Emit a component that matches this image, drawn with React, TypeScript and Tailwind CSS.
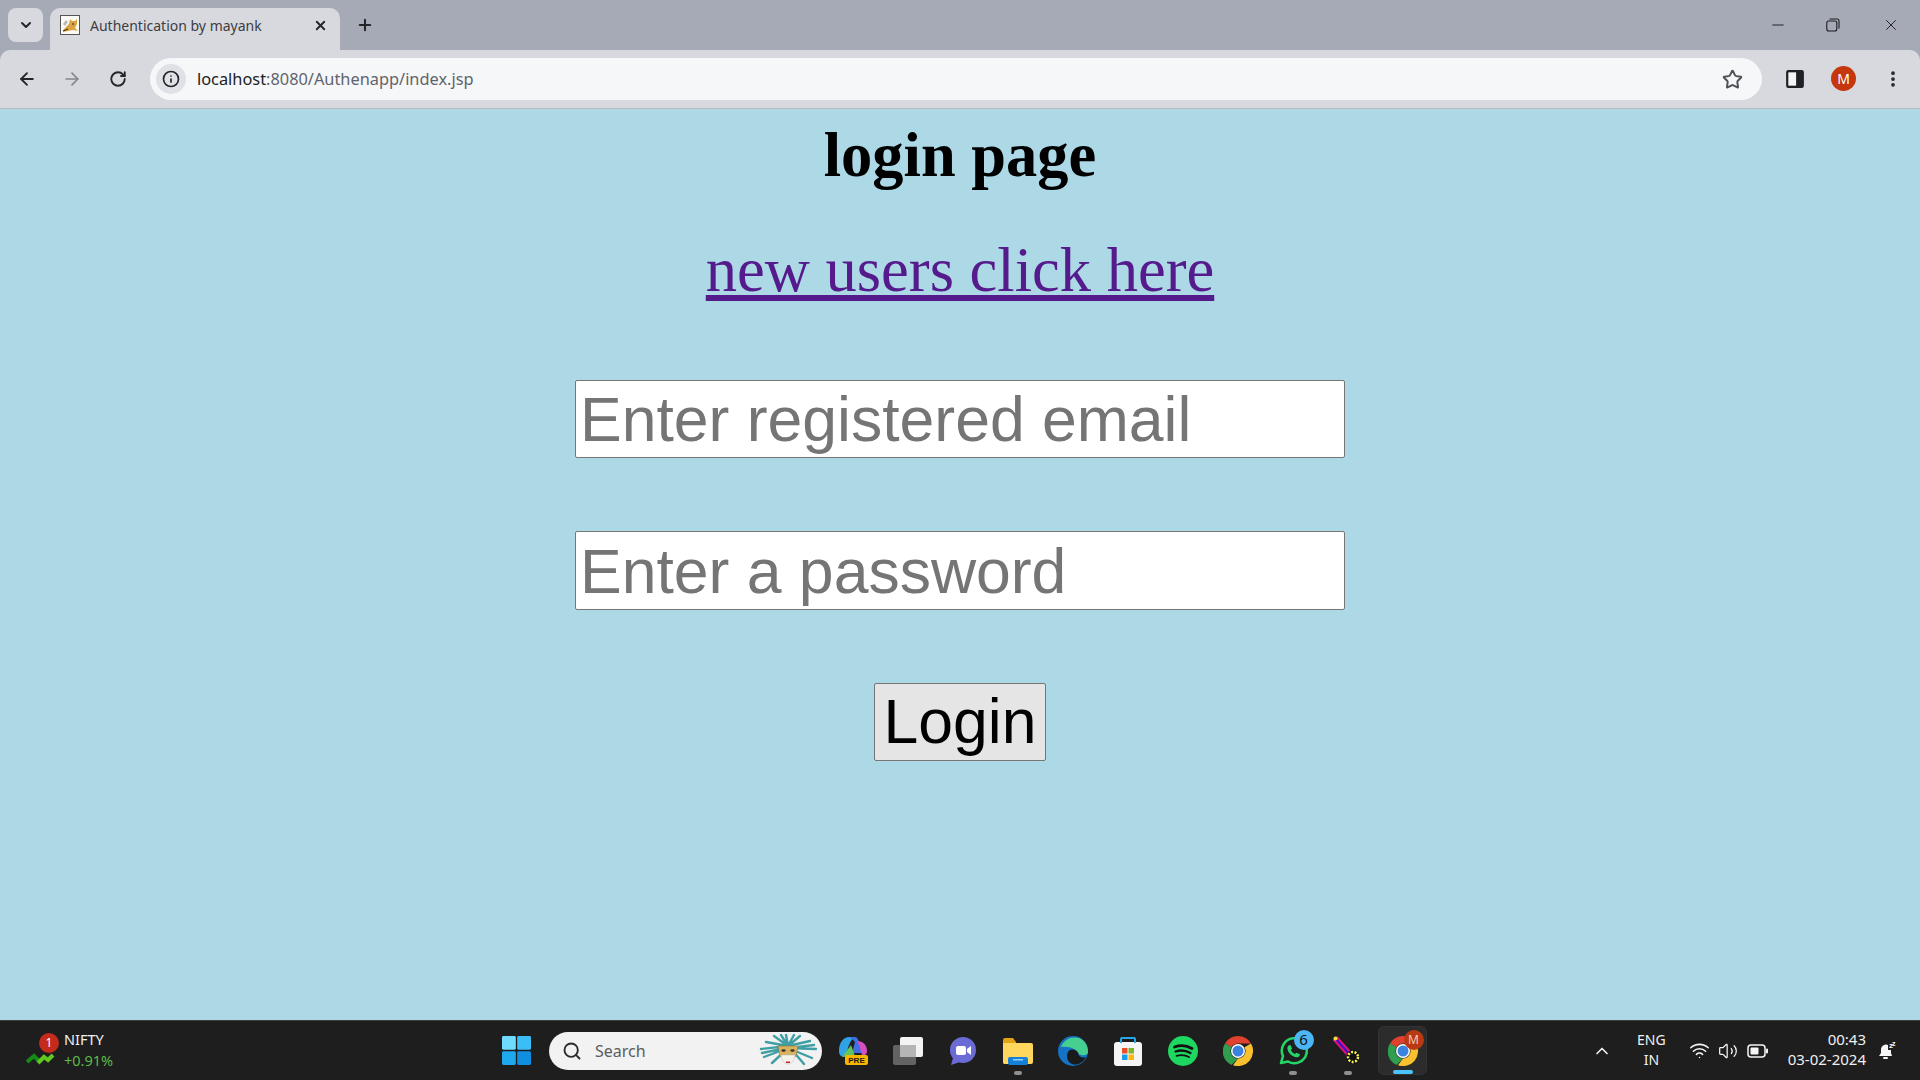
import React from 'react';
import { ArrowLeft, ArrowRight, ChevronDown, ChevronUp, EllipsisVertical, Info, Minus, Plus, RotateCw, Search, Star, Volume2, Wifi, X } from 'lucide-react';

const UI_FONT = "font-['Noto_Sans','Open_Sans',sans-serif]";

function TomcatFavicon() {
  return (
    <svg viewBox="0 0 20 20" className="h-5 w-5 shrink-0">
      <rect x="0.5" y="0.5" width="19" height="19" fill="#fbfaf4" stroke="#555" />
      <path d="M4 14 L9 9 L10 4 L12 6 L15 6 L17 4 L17 9 L15 13 L18 16 L13 15 L8 16 L3 17 Z" fill="#d9a441" />
      <path d="M3 9 L6 5 L8 7 L5 11 Z" fill="#b9b9b9" />
      <path d="M3 16 L8 14 M12 9 L14 9" stroke="#3a2a10" strokeWidth="1" />
    </svg>
  );
}

function TitleBar() {
  return (
    <div className={`flex h-[50px] items-end bg-[#a6a9b6] pl-2 ${UI_FONT}`}>
      <div className="mb-2 flex h-[34px] w-[35px] items-center justify-center rounded-lg bg-[#d8d9df]">
        <ChevronDown size={16} strokeWidth={3} className="text-[#25262a]" />
      </div>
      <div className="ml-[7px] flex h-[42px] w-[290px] items-center rounded-t-[10px] bg-[#d8d9df] pb-[8px] pl-[10px] pr-3">
        <TomcatFavicon />
        <span className="ml-[10px] flex-1 text-[14px] text-[#3c3d42]">Authentication by mayank</span>
        <X size={15} strokeWidth={3} className="text-[#25262a]" />
      </div>
      <div className="mb-2 ml-[16px] flex h-[34px] items-center">
        <Plus size={18} strokeWidth={2.75} className="text-[#25262a]" />
      </div>
      <div className="flex-1" />
      <div className="mb-[10px] flex h-[30px] items-center text-[#1c1c20]">
        <Minus size={18} strokeWidth={1.25} />
        <svg viewBox="0 0 14 14" className="ml-[39px] h-[14px] w-[14px]" fill="none" stroke="currentColor" strokeWidth="1.1">
          <rect x="0.8" y="3" width="10" height="10" rx="2" />
          <path d="M3.5 1 H11 A2 2 0 0 1 13 3 V10.5" />
        </svg>
        <X size={18} strokeWidth={1.25} className="ml-[42px] mr-5" />
      </div>
    </div>
  );
}

function Toolbar() {
  return (
    <div className={`flex h-[59px] items-center rounded-t-[10px] border-b border-[#b9bac0] bg-[#d8d9df] ${UI_FONT}`}>
      <ArrowLeft size={20} strokeWidth={2.25} className="ml-[17px] text-[#25262a]" />
      <ArrowRight size={20} strokeWidth={2} className="ml-[25px] text-[#85868c]" />
      <RotateCw size={18} strokeWidth={2.5} className="ml-[27px] text-[#25262a]" />
      <div className="ml-[23px] flex h-[42px] flex-1 items-center rounded-full bg-[#f6f7f9] pl-[6px] pr-[19px]">
        <div className="flex h-[30px] w-[30px] items-center justify-center rounded-full bg-[#dfe1e6]">
          <Info size={18} strokeWidth={2.25} className="text-[#25262a]" />
        </div>
        <span className="ml-[11px] flex-1 text-[16.35px] text-[#60646c]">
          <span className="text-[#202124]">localhost</span>:8080/Authenapp/index.jsp
        </span>
        <Star size={21} strokeWidth={2.25} className="text-[#505157]" />
      </div>
      <svg viewBox="0 0 18 18" className="ml-[23px] h-5 w-5">
        <rect x="1" y="1" width="16" height="16" rx="2" fill="#202124" />
        <rect x="3" y="3" width="7" height="12" fill="#f4f5f7" />
      </svg>
      <div className="ml-[26px] -mt-[1px] flex h-[25px] w-[25px] items-center justify-center rounded-full bg-[#c5370d] text-[14px] text-white">M</div>
      <EllipsisVertical size={20} strokeWidth={2.5} className="ml-[27px] mr-[17px] text-[#25262a]" />
    </div>
  );
}

function LoginPage() {
  return (
    <main className="flex h-[911px] flex-col items-center bg-[#add8e6] text-black">
      <h1 className="mt-[10px] font-['Liberation_Serif',serif] text-[62.5px] font-bold leading-[72px]">login page</h1>
      <a href="#" className="mt-[43px] font-['Liberation_Serif',serif] text-[62.5px] leading-[72px] text-[#551a8b] underline">
        new users click here
      </a>
      <input
        type="text"
        placeholder="Enter registered email"
        className="mt-[74px] h-[78px] w-[770px] rounded-[2px] border border-[#767676] bg-white px-[4px] pt-[2px] font-['Liberation_Sans',sans-serif] text-[62.5px] placeholder-[#757575] outline-none"
      />
      <input
        type="password"
        placeholder="Enter a password"
        className="mt-[73px] h-[79px] w-[770px] rounded-[2px] border border-[#767676] bg-white px-[4px] pt-[2px] font-['Liberation_Sans',sans-serif] text-[62.5px] placeholder-[#757575] outline-none"
      />
      <button className="mt-[73px] h-[78px] w-[172px] rounded-[2px] border border-[#767676] bg-[#e5e5e5] pb-[2px] font-['Liberation_Sans',sans-serif] text-[62.5px] leading-[72px] text-black">
        Login
      </button>
    </main>
  );
}

function Slot({ children, dot }: { children: React.ReactNode; dot?: boolean }) {
  return (
    <div className="relative flex h-[50px] w-[55px] shrink-0 items-center justify-center">
      {children}
      {dot && <div className="absolute bottom-[1px] h-[4px] w-[8px] rounded-full bg-[#8f8f8f]" />}
    </div>
  );
}

function ChromeIcon() {
  return (
    <svg viewBox="0 0 30 30" className="h-[30px] w-[30px]">
      <path d="M15 0 A15 15 0 0 1 28 7.5 L15 7.5 A7.5 7.5 0 0 0 8.5 11.2 L2 7.5 A15 15 0 0 1 15 0 Z" fill="#e0412f" />
      <path d="M2 7.5 L8.5 11.2 A7.5 7.5 0 0 0 15 22.5 L8.5 29 A15 15 0 0 1 2 7.5 Z" fill="#2f9e4f" />
      <path d="M28 7.5 A15 15 0 0 1 10 29.2 L15 22.5 A7.5 7.5 0 0 0 21.5 11.2 Z" fill="#fbc02d" />
      <circle cx="15" cy="15" r="7" fill="#fff" />
      <circle cx="15" cy="15" r="5.5" fill="#3b82e0" />
    </svg>
  );
}

function TaskbarApps() {
  return (
    <>
      <Slot>
        <svg viewBox="0 0 30 28" className="h-[28px] w-[30px]">
          <path d="M1 14 C1 5 6 0 11 0 H18 C14 1 12 5 10 11 L8 18 C6 21 1 20 1 14 Z" fill="#2fa3e6" />
          <path d="M11 0 H17 C19 0 20 2 21 5 L24 16 H14 L17 5 C15 3 13 1 11 0 Z" fill="#3f6fe0" />
          <path d="M19 4 C25 4 29 8 29 14 C29 17 27 19 24 18 L21 8 Z" fill="#d64fc0" />
          <path d="M4 20 L13 8 L17 19 Z" fill="#62c45a" />
          <rect x="7" y="18" width="23" height="10" rx="2" fill="#f7b500" />
          <text x="18.5" y="26.3" textAnchor="middle" fontSize="8" fontWeight="700" fill="#1a1a1a" fontFamily="Liberation Sans, sans-serif">PRE</text>
        </svg>
      </Slot>
      <Slot>
        <svg viewBox="0 0 30 28" className="h-[28px] w-[30px]">
          <rect x="7" y="0" width="23" height="20" rx="2" fill="#f3f3f3" />
          <rect x="0" y="8" width="23" height="20" rx="2" fill="#6a6a6a" fillOpacity="0.9" />
          <rect x="7" y="8" width="16" height="12" fill="#b5b5b5" />
        </svg>
      </Slot>
      <Slot>
        <svg viewBox="0 0 30 30" className="h-[30px] w-[30px]">
          <circle cx="15" cy="14" r="13" fill="#6b6bd6" />
          <path d="M5 22 L3 29 L12 26 Z" fill="#6b6bd6" />
          <rect x="8" y="10" width="10" height="9" rx="2" fill="#fff" />
          <path d="M19 13 L23 10 V19 L19 16 Z" fill="#fff" />
        </svg>
      </Slot>
      <Slot dot>
        <svg viewBox="0 0 30 28" className="h-[28px] w-[30px]">
          <path d="M0 3 A2 2 0 0 1 2 1 H10 L13 5 V27 H2 A2 2 0 0 1 0 25 Z" fill="#e0a416" />
          <path d="M0 6 H28 A2 2 0 0 1 30 8 V25 A2 2 0 0 1 28 27 H2 A2 2 0 0 1 0 25 Z" fill="#ffd75e" />
          <rect x="5" y="20" width="20" height="8" rx="2" fill="#1480d8" />
          <rect x="10" y="22" width="10" height="1.5" fill="#8fd0ff" />
        </svg>
      </Slot>
      <Slot>
        <svg viewBox="0 0 30 30" className="h-[30px] w-[30px]">
          <circle cx="15" cy="15" r="15" fill="#1572c4" />
          <path d="M3 11 C6 3 14 0 21 2 C27 4 30 10 30 16 C30 20 24 20 21 18 C19 14 13 10 3 11 Z" fill="#46cf8e" />
          <path d="M10 16 C12 12 19 13 20 17 C21 22 26 22 28 21 C25 27 19 30 14 28 C9 26 8 20 10 16 Z" fill="#1a1a1a" />
        </svg>
      </Slot>
      <Slot>
        <svg viewBox="0 0 30 30" className="h-[30px] w-[30px]">
          <rect x="1" y="6" width="28" height="24" rx="3" fill="#f5f5f5" />
          <path d="M8 7 V3 A1 1 0 0 1 9 2 H21 A1 1 0 0 1 22 3 V7" fill="none" stroke="#29a8e8" strokeWidth="2" />
          <rect x="9" y="12" width="5.5" height="5.5" fill="#e8502a" />
          <rect x="15.5" y="12" width="5.5" height="5.5" fill="#7cb82a" />
          <rect x="9" y="18.5" width="5.5" height="5.5" fill="#1b9ce8" />
          <rect x="15.5" y="18.5" width="5.5" height="5.5" fill="#f9b90e" />
        </svg>
      </Slot>
      <Slot>
        <svg viewBox="0 0 30 30" className="h-[30px] w-[30px]" fill="none" stroke="#121212" strokeLinecap="round">
          <circle cx="15" cy="15" r="15" fill="#1ed760" stroke="none" />
          <path d="M6.5 11 C12 9 19 9.5 24 12.5" strokeWidth="2.8" />
          <path d="M7.5 15.5 C12 14 18 14.5 22.5 17" strokeWidth="2.3" />
          <path d="M8.5 19.8 C12.5 18.8 17.5 19 21 21" strokeWidth="1.9" />
        </svg>
      </Slot>
      <Slot>
        <ChromeIcon />
      </Slot>
      <Slot dot>
        <div className="relative">
          <svg viewBox="0 0 30 30" className="h-[30px] w-[30px]" fill="none">
            <path d="M3 27 L5 20 A12.5 12.5 0 1 1 10 25.5 Z" stroke="#25d366" strokeWidth="2.6" strokeLinejoin="round" />
            <path d="M10.5 9.5 L12.5 9 L14 12.5 L12.8 14 C13.8 16 15 17.2 17 18 L18.5 16.7 L22 18.3 L21.5 20 C19.5 22.5 15 21 12 18 C9.5 15 8.5 11.5 10.5 9.5 Z" fill="#25d366" />
          </svg>
          <div className={`absolute -right-[6px] -top-[6px] flex h-5 w-5 items-center justify-center rounded-full bg-[#4cb5f5] text-[15px] text-[#111] ${UI_FONT}`}>6</div>
        </div>
      </Slot>
      <Slot dot>
        <svg viewBox="0 0 30 30" className="h-[30px] w-[30px]">
          <path d="M2 2 L18 20" stroke="#e8107a" strokeWidth="6" />
          <path d="M2 2 L18 20" stroke="#3a10c8" strokeWidth="2" />
          <circle cx="2.5" cy="2.5" r="2" fill="#f0e040" />
          <circle cx="20" cy="21" r="7" fill="#111" />
          <circle cx="20" cy="21" r="5" fill="none" stroke="#f3ee5a" strokeWidth="2.5" strokeDasharray="2 1.5" />
        </svg>
      </Slot>
      {/* Active app keeps a narrower highlighted tile */}
      <div className="relative mx-[3px] flex h-[49px] w-[49px] shrink-0 items-center justify-center rounded-md border border-[#333] bg-[#2c2c2c]">
        <div className="relative">
          <ChromeIcon />
          <div className={`absolute -right-[6px] -top-[6px] flex h-5 w-5 items-center justify-center rounded-full bg-[#b93a12] text-[12px] text-[#f2c9b8] ${UI_FONT}`}>M</div>
        </div>
        <div className="absolute bottom-[0px] h-[4px] w-[20px] rounded-full bg-[#4cc2ff]" />
      </div>
    </>
  );
}

function MaskIcon() {
  return (
    <svg viewBox="0 0 60 34" className="h-[34px] w-[60px]">
      <g stroke="#3f9fa5" strokeWidth="2.4" strokeLinecap="round">
        <path d="M30 12 L8 8 M30 12 L3 15 M30 14 L6 23 M30 12 L16 2 M30 12 L23 1 M30 12 L28 1 M30 12 L36 1 M30 12 L42 2 M30 12 L52 7 M30 14 L58 15 M30 14 L54 24 M28 16 L14 29 M34 16 L46 30 M28 14 L4 19 M32 14 L56 11" />
      </g>
      <path d="M20 12 H40 L38 22 C36 24 32 23 30 21 C28 23 24 24 22 22 Z" fill="#d9b25f" stroke="#8a6a2a" strokeWidth="0.5" />
      <path d="M23 21 C24 33 36 33 37 21 L30 21 Z" fill="#f4f0ea" stroke="#bbb" strokeWidth="0.5" />
      <ellipse cx="25.5" cy="16.5" rx="2.2" ry="1.3" fill="#3a3020" />
      <ellipse cx="34.5" cy="16.5" rx="2.2" ry="1.3" fill="#3a3020" />
      <rect x="28" y="27.5" width="4" height="1.5" fill="#d02030" />
    </svg>
  );
}

function Taskbar() {
  return (
    <footer className={`flex h-[60px] items-center border-t border-[#3c3c3c] bg-[#1e1e1e] text-white ${UI_FONT}`}>
      {/* Widgets */}
      <div className="flex w-[500px] items-center pl-[26px]">
        <div className="relative mt-[6px] h-[30px] w-[38px]">
          <svg viewBox="0 0 30 16" className="absolute bottom-[2px] left-0 h-4 w-[30px]">
            <path d="M1 11 L8 5 L13 10" fill="none" stroke="#178a17" strokeWidth="4" />
            <path d="M12 12 L18 6 L22 9 L27 4" fill="none" stroke="#5fc91f" strokeWidth="4" />
          </svg>
          <div className="absolute left-[13px] -top-[6px] flex h-5 w-5 items-center justify-center rounded-full bg-[#c42b1c] text-[12px]">1</div>
        </div>
        <div className="-mt-[2px] flex flex-col leading-[21px]">
          <span className="text-[14.5px] text-[#f0f0f0]">NIFTY</span>
          <span className="text-[14.5px] text-[#5dbb46]">+0.91%</span>
        </div>
      </div>

      {/* Start + search + pinned */}
      <svg viewBox="0 0 30 30" className="ml-[2px] h-[29px] w-[29px] shrink-0">
        <rect x="0" y="0" width="14.3" height="14.3" rx="1.5" fill="#6fdcff" />
        <rect x="15.7" y="0" width="14.3" height="14.3" rx="1.5" fill="#3bbdf8" />
        <rect x="0" y="15.7" width="14.3" height="14.3" rx="1.5" fill="#1fa8ee" />
        <rect x="15.7" y="15.7" width="14.3" height="14.3" rx="1.5" fill="#0f8fe0" />
      </svg>
      <div className="ml-[18px] flex h-[38px] w-[273px] shrink-0 items-center rounded-full bg-[#f2f2f2] pl-[13px] pr-[4px] text-[#5c5c5c]">
        <Search size={20} strokeWidth={2.25} className="text-[#2b2b2b]" />
        <span className="ml-[13px] flex-1 text-[16px]">Search</span>
        <MaskIcon />
      </div>
      <div className="ml-[3px] flex items-center">
        <TaskbarApps />
      </div>

      {/* Tray */}
      <div className="flex flex-1 items-center justify-end">
        <ChevronUp size={20} strokeWidth={2} className="text-[#f0f0f0]" />
        <div className="ml-[25px] -mt-[2px] flex flex-col items-center text-[14px] leading-[20px] text-[#f0f0f0]">
          <span>ENG</span>
          <span>IN</span>
        </div>
        <Wifi size={21} strokeWidth={1.75} className="ml-[23px] text-[#f5f5f5]" />
        <Volume2 size={20} strokeWidth={1.5} className="ml-[8px] text-[#f5f5f5]" />
        <svg viewBox="0 0 22 14" className="ml-[9px] h-[14px] w-[22px]">
          <rect x="1" y="1" width="17" height="12" rx="3" fill="none" stroke="#f5f5f5" strokeWidth="1.5" />
          <rect x="3.5" y="3.5" width="8" height="7" rx="1" fill="#f5f5f5" />
          <rect x="19" y="4.5" width="2" height="5" rx="1" fill="#f5f5f5" />
        </svg>
        <div className="ml-[19px] -mt-[3px] flex flex-col items-end text-[15px] leading-[20px] text-[#f0f0f0]">
          <span>00:43</span>
          <span>03-02-2024</span>
        </div>
        <svg viewBox="0 0 20 20" className="ml-[10px] mr-[24px] h-5 w-5" fill="#f5f5f5">
          <path d="M3 15 L5 12 V8 A5 5 0 0 1 12 4 V15 Z" />
          <path d="M12 9 H15 V12 L16 15 H12 Z" />
          <rect x="7" y="16" width="5" height="2" rx="1" />
          <text x="13" y="7" fontSize="8" fontWeight="700" fontFamily="Liberation Sans, sans-serif">z</text>
          <text x="16" y="5" fontSize="7" fontWeight="700" fontFamily="Liberation Sans, sans-serif">z</text>
        </svg>
      </div>
    </footer>
  );
}

export default function App() {
  return (
    <div className="h-[1080px] w-[1920px] overflow-hidden bg-[#a6a9b6]">
      <TitleBar />
      <Toolbar />
      <LoginPage />
      <Taskbar />
    </div>
  );
}
